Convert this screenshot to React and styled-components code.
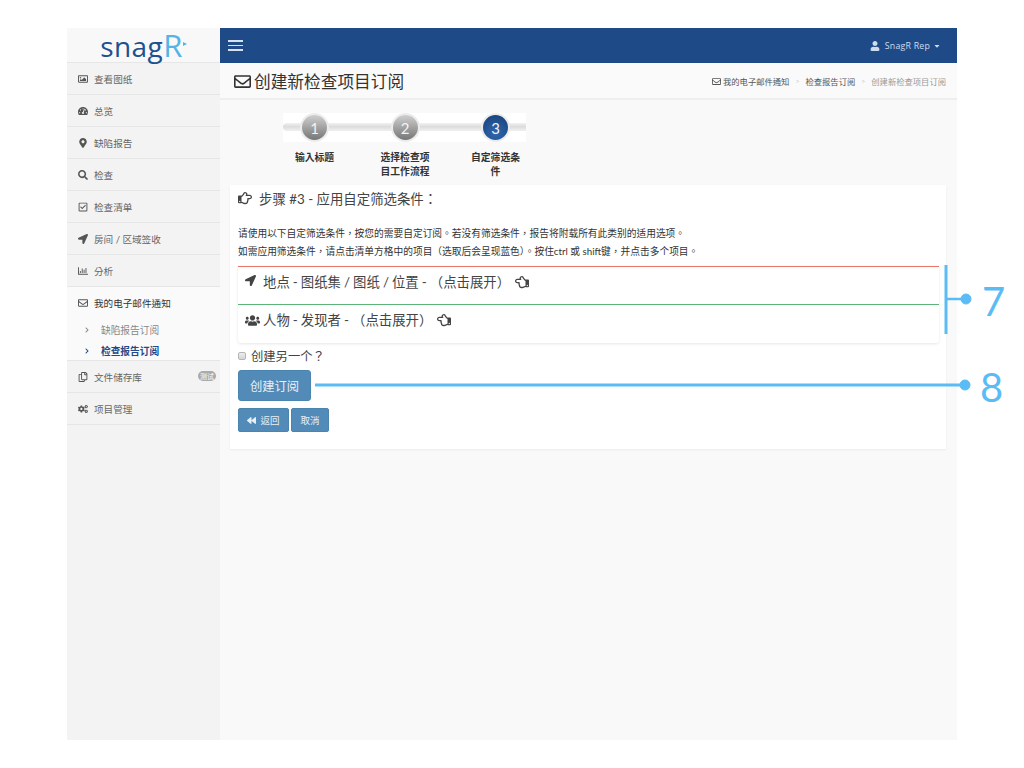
import React from 'react';
import styled, { createGlobalStyle } from 'styled-components';
import {
  FaRegImage, FaTachometerAlt, FaMapMarkerAlt, FaSearch, FaRegCheckSquare, FaLocationArrow,
  FaRegChartBar, FaRegEnvelope, FaChevronRight, FaRegCopy, FaCogs, FaUser, FaCaretDown,
  FaRegHandPointRight, FaRegHandPointLeft, FaUsers, FaBackward,
} from 'react-icons/fa';

const stack = `Lato, "Noto Sans CJK TC", sans-serif`;
const Global = createGlobalStyle`
  html, body { margin: 0; padding: 0; background: #fff; overflow: hidden; }
  body { font-family: ${stack}; color: #444; }
  * { box-sizing: border-box; }
`;
const Page = styled.div`position: relative; width: 1024px; height: 768px; padding: 28px 67px;`;
const Shell = styled.div`display: flex; width: 890px; height: 712px; background: #f9f9f9;`;
const Sidebar = styled.aside`width: 153px; flex: none; background: #f3f3f3; display: flex; flex-direction: column;`;
const LogoBox = styled.div`
  height: 35px; background: #f8f8f8; border-bottom: 1px solid #e6e6e6;
  display: flex; align-items: center; justify-content: center; flex: none; padding-right: 4px;
`;
const Logo = styled.span`
  font-family: "Open Sans", sans-serif; font-size: 28px; line-height: 30px; color: #20508f; letter-spacing: .4px; position: relative;
  b { font-weight: 400; font-size: 31px; color: #54b4e6; line-height: 30px; }
  i { position: absolute; right: -4px; top: 12px; width: 0; height: 0; border-left: 4px solid #54b4e6; border-top: 2.5px solid transparent; border-bottom: 2.5px solid transparent; }
`;
const Item = styled.div`
  height: 32px; border-bottom: 1px solid #e6e6e6; padding-left: 11px; display: flex; align-items: center;
  font-size: 9.6px; color: ${p => p.$dark ? '#333' : '#666'}; position: relative; flex: none;
  background: ${p => p.$open ? '#fafafa' : 'transparent'};
  border-bottom-color: ${p => p.$open ? 'transparent' : '#e6e6e6'};
`;
const ItemIcon = styled.span`width: 16px; display: flex; justify-content: flex-start; font-size: 10px; color: #555;`;
const OpenGroup = styled.div`background: #fafafa; border-bottom: 1px solid #e6e6e6; height: 42px; display: flex; flex-direction: column; flex: none;`;
const SubItem = styled.div`
  height: 21px; padding-left: 17px; display: flex; align-items: center; gap: 11px; font-size: 9.7px; flex: none;
  color: ${p => p.$active ? '#1f4a88' : '#888'}; font-weight: ${p => p.$active ? 700 : 400};
  svg { font-size: 6px; }
`;
const Badge = styled.span`
  position: absolute; right: 4px; top: 10px; width: 18px; height: 10px; border-radius: 5px; background: #aaa; color: #fff;
  font-size: 7px; line-height: 10px; text-align: center;
`;
const Main = styled.main`flex: 1; min-width: 0; display: flex; flex-direction: column;`;
const TopBar = styled.header`
  height: 35px; background: #1f4a88; color: #cfdcec; display: flex; align-items: center; justify-content: space-between;
  padding: 0 16px 0 8px; flex: none;
`;
const Burger = styled.div`
  width: 15px; display: flex; flex-direction: column; gap: 3px;
  span { display: block; height: 1.5px; background: #d8e2ef; }
`;
const UserMenu = styled.div`
  display: flex; align-items: center; font-family: "Open Sans", sans-serif; font-size: 8.8px; letter-spacing: .2px; gap: 3px;
  svg:first-child { font-size: 10px; margin-right: 2px; }
  svg:last-child { font-size: 8px; }
`;
const Header = styled.div`
  height: 37px; flex: none; background: #fafafa; border-bottom: 2px solid #eee; display: flex; align-items: center;
  justify-content: space-between; padding: 1px 11px 0 14px;
`;
const Title = styled.h1`margin: 0; font-weight: 400; font-size: 16.7px; color: #333; display: flex; align-items: center; gap: 3px; svg { font-size: 17px; }`;
const Crumbs = styled.div`font-size: 8.3px; color: #555; display: flex; align-items: center; gap: 6px; svg { font-size: 9px; margin-right: 2px; vertical-align: -1px; }`;
const CrumbSep = styled.span`color: #ccc; font-size: 7px;`;
const CrumbNow = styled.span`color: #999;`;
const Wizard = styled.div`
  position: relative; height: 85px; flex: none; margin-left: 49px; display: grid; grid-template-columns: 91px 90px 91px; padding-top: 13px;
`;
const Strip = styled.div`
  position: absolute; left: 14px; top: 13px; width: 243px; height: 29px; background: #fff;
  &::after { content: ""; position: absolute; left: 0; right: 0; top: 10px; height: 8px; background: linear-gradient(#f2f2f2, #dcdcdc 45%, #f0f0f0); border-radius: 4px 0 0 4px; }
`;
const Step = styled.div`position: relative; display: flex; flex-direction: column; align-items: center;`;
const Dot = styled.div`
  width: 29px; height: 29px; border-radius: 50%; border: 2px solid #ececec; color: #f2f2f2; font-size: 15px; font-weight: 400;
  display: flex; align-items: center; justify-content: center;
  background: ${p => p.$active ? 'radial-gradient(circle at 50% 75%, #3067ad, #173f78)' : 'linear-gradient(#cfcfcf, #767676)'};
`;
const StepLabel = styled.div`margin-top: 8px; width: 52px; text-align: center; font-size: 9.8px; line-height: 14px; font-weight: 600; color: #333;`;
const Card = styled.section`
  width: 716px; margin-left: 10px; height: 264px; background: #fff; padding: 3px 7px 0 8px; box-shadow: 0 1px 2px rgba(0,0,0,.06); flex: none;
`;
const StepHead = styled.h2`
  margin: 0; font-size: 13.4px; font-weight: 400; color: #444; height: 20px; display: flex; align-items: center; gap: 7px;
  svg { font-size: 14px; }
`;
const Help = styled.p`margin: 16px 0 6px; font-size: 9.72px; line-height: 18px; color: #333; white-space: nowrap;`;
const Filters = styled.div`box-shadow: 0 1px 3px rgba(0,0,0,.1); border-radius: 0 0 3px 3px;`;
const Filter = styled.div`
  height: ${p => p.$h}px; border-top: 1px solid ${p => p.$line}; padding: 5px 0 0 7px; display: flex; align-items: flex-start; gap: ${p => p.$gap}px;
  font-size: 13.4px; line-height: 20px; color: #444; word-spacing: -.4px;
  > svg { font-size: ${p => p.$icon}px; margin-top: 3px; flex: none; }
`;
const HandIcon = styled.span`display: inline-flex; margin-left: ${p => p.$m}px; svg { font-size: 14px; margin-top: 3px; }`;
const CheckRow = styled.label`display: flex; align-items: center; gap: 5px; margin-top: 5px; height: 16px; font-size: 12.3px; color: #444;`;
const Check = styled.input`
  appearance: none; width: 8px; height: 8px; margin: 0; border: 1px solid #b5b5b5; border-radius: 2px; background: linear-gradient(#eee, #d5d5d5); flex: none;
`;
const Primary = styled.button`
  display: block; margin-top: 6px; width: 73px; height: 31px; border: 1px solid #4a85b0; border-radius: 3px; background: #528bb8; color: #e8f0f7;
  font: 400 12.3px ${stack}; padding: 0;
`;
const BtnRow = styled.div`display: flex; gap: 2px; margin-top: 7px;`;
const Small = styled.button`
  width: ${p => p.$w}px; height: 24px; border: 1px solid #4a85b0; border-radius: 2px; background: #528bb8; color: #e8f0f7;
  font: 400 9.5px ${stack}; padding: 0; display: flex; align-items: center; justify-content: center; gap: 4px;
  svg { font-size: 9px; }
`;
const Overlay = styled.svg`position: absolute; left: 0; top: 0; width: 1024px; height: 768px; pointer-events: none;`;
const Callout = styled.span`
  position: absolute; left: ${p => p.$x}px; top: ${p => p.$y}px; font-family: Lato, sans-serif; font-weight: 400; font-size: 40px; line-height: 40px; color: #5bbcf5;
`;

const nav = [
  [FaRegImage, '查看图纸'], [FaTachometerAlt, '总览'], [FaMapMarkerAlt, '缺陷报告'], [FaSearch, '检查'],
  [FaRegCheckSquare, '检查清单'], [FaLocationArrow, '房间 / 区域签收'], [FaRegChartBar, '分析'],
];

export default function App() {
  return (
    <Page>
      <Global />
      <Shell>
        <Sidebar>
          <LogoBox><Logo>snag<b>R</b><i /></Logo></LogoBox>
          {nav.map(([I, t]) => <Item key={t}><ItemIcon><I /></ItemIcon>{t}</Item>)}
          <Item $open $dark><ItemIcon><FaRegEnvelope /></ItemIcon>我的电子邮件通知</Item>
          <OpenGroup>
            <SubItem><FaChevronRight />缺陷报告订阅</SubItem>
            <SubItem $active><FaChevronRight />检查报告订阅</SubItem>
          </OpenGroup>
          <Item><ItemIcon><FaRegCopy /></ItemIcon>文件储存库<Badge>测试</Badge></Item>
          <Item><ItemIcon><FaCogs /></ItemIcon>项目管理</Item>
        </Sidebar>
        <Main>
          <TopBar>
            <Burger><span /><span /><span /></Burger>
            <UserMenu><FaUser />SnagR Rep<FaCaretDown /></UserMenu>
          </TopBar>
          <Header>
            <Title><FaRegEnvelope />创建新检查项目订阅</Title>
            <Crumbs>
              <span><FaRegEnvelope />我的电子邮件通知</span><CrumbSep>&gt;</CrumbSep>
              <span>检查报告订阅</span><CrumbSep>&gt;</CrumbSep>
              <CrumbNow>创建新检查项目订阅</CrumbNow>
            </Crumbs>
          </Header>
          <Wizard>
            <Strip />
            <Step><Dot>1</Dot><StepLabel>输入标题</StepLabel></Step>
            <Step><Dot>2</Dot><StepLabel>选择检查项目工作流程</StepLabel></Step>
            <Step><Dot $active>3</Dot><StepLabel>自定筛选条件</StepLabel></Step>
          </Wizard>
          <Card>
            <StepHead><FaRegHandPointRight />步骤 #3 - 应用自定筛选条件：</StepHead>
            <Help>
              请使用以下自定筛选条件，按您的需要自定订阅。若没有筛选条件，报告将附载所有此类别的适用选项。<br />
              如需应用筛选条件，请点击清单方格中的项目（选取后会呈现蓝色）。按住ctrl 或 shift键，并点击多个项目。
            </Help>
            <Filters>
              <Filter $line="#e8796a" $h={38} $gap={7} $icon={11}><FaLocationArrow /><span>地点 - 图纸集 / 图纸 / 位置 - （点击展开）</span><HandIcon $m={-2}><FaRegHandPointLeft /></HandIcon></Filter>
              <Filter $line="#5cb377" $h={39} $gap={3} $icon={15}><FaUsers /><span>人物 - 发现者 - （点击展开）</span><HandIcon $m={2}><FaRegHandPointLeft /></HandIcon></Filter>
            </Filters>
            <CheckRow><Check type="checkbox" />创建另一个？</CheckRow>
            <Primary>创建订阅</Primary>
            <BtnRow>
              <Small $w={51}><FaBackward />返回</Small>
              <Small $w={38}>取消</Small>
            </BtnRow>
          </Card>
        </Main>
      </Shell>
      <Overlay viewBox="0 0 1024 768">
        <g fill="#5bbcf5" stroke="#5bbcf5">
          <path d="M946 265V334" strokeWidth="3" fill="none" />
          <path d="M946 299H966" strokeWidth="2.5" fill="none" />
          <circle cx="966" cy="299" r="5" />
          <path d="M315 385H965" strokeWidth="3" fill="none" />
          <circle cx="965" cy="385" r="5" />
        </g>
      </Overlay>
      <Callout $x={982} $y={281}>7</Callout>
      <Callout $x={980} $y={367}>8</Callout>
    </Page>
  );
}
